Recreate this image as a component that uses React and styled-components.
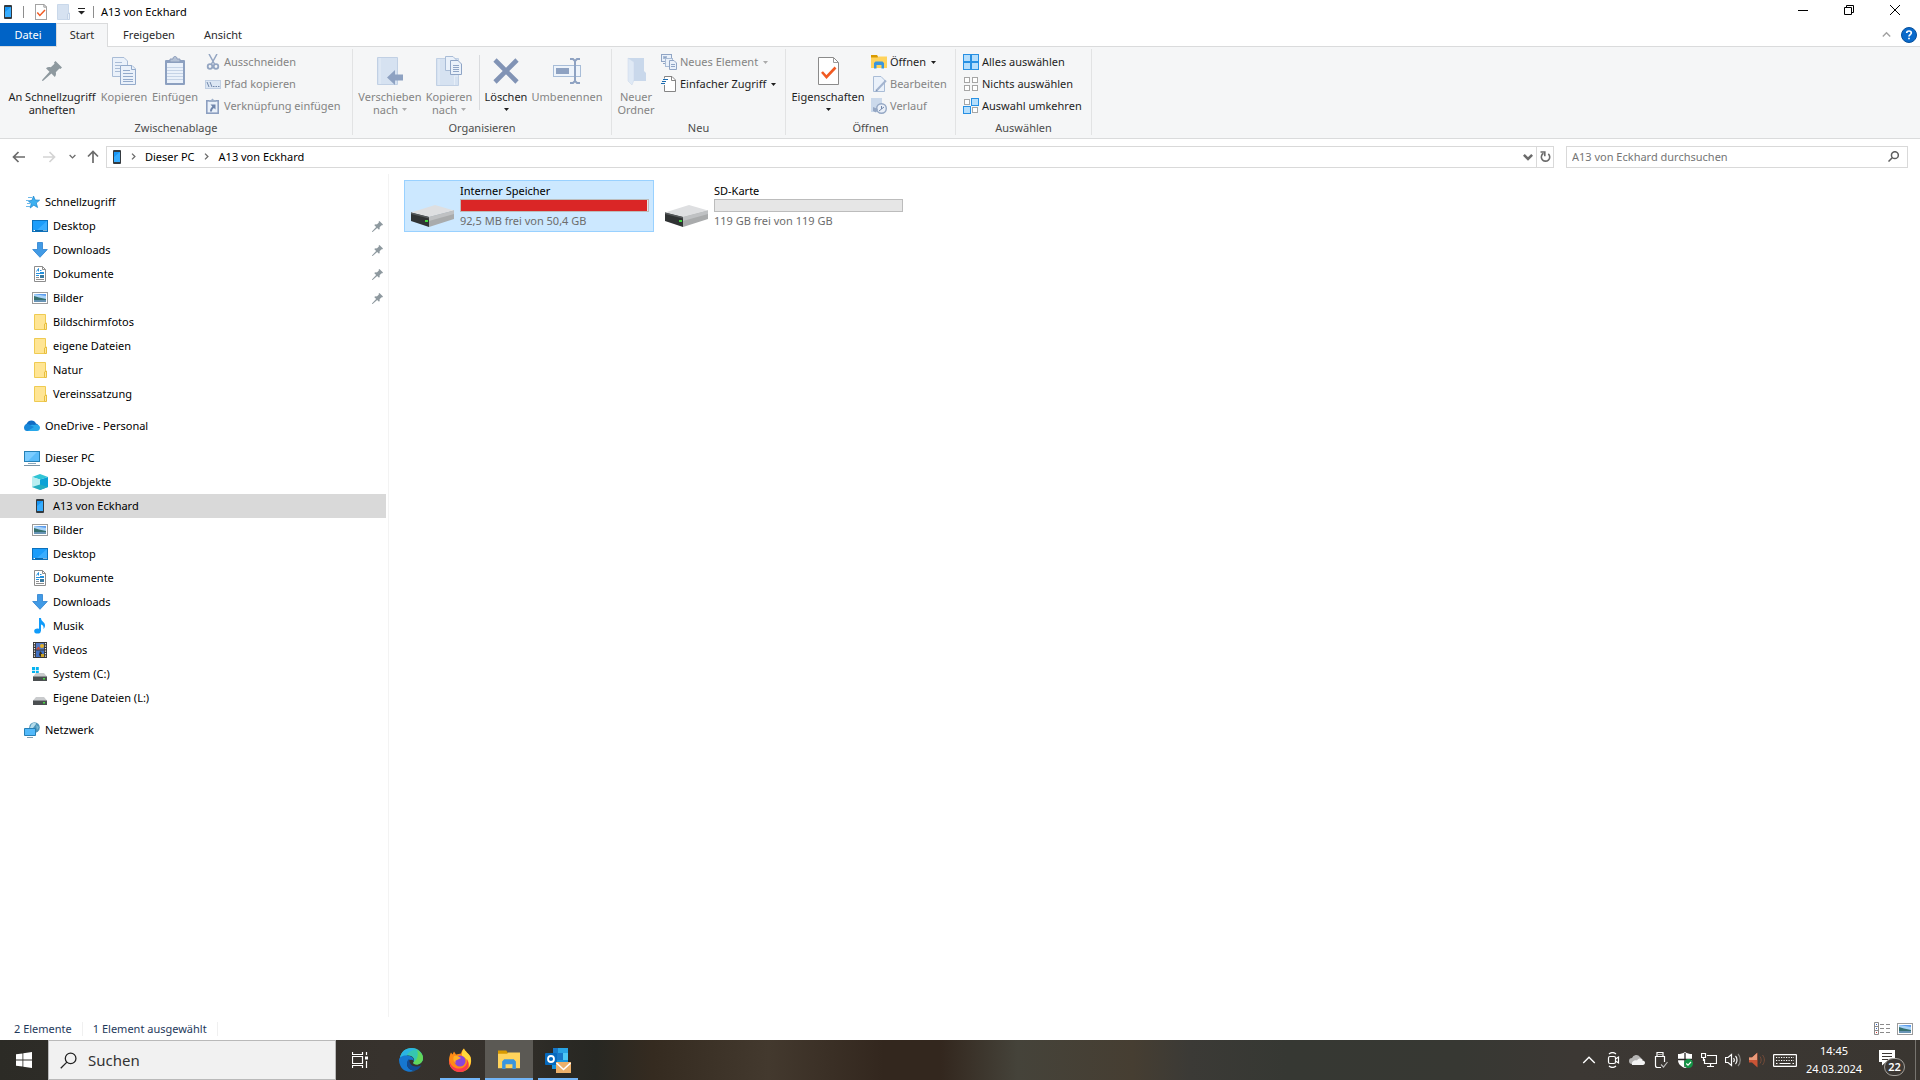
import React, {useState} from 'react';
import styled, {createGlobalStyle} from 'styled-components';

const GlobalStyle = createGlobalStyle`
  *{
    box-sizing: border-box;
  }
  body{
    margin: 0;
    background-color: #fff;
    color: #000;
    font-family: "Noto Sans", "Open Sans", sans-serif;
    font-size: 11px;
    line-height: 16px;
  }
  button, input{
    font: inherit;
    color: inherit;
    padding: 0;
    border: none;
    background: none;
  }
  svg{
    display: block;
    flex: none;
  }
`

const Window = styled.div`
  display: flex;
  flex-direction: column;
  min-height: 100vh;
`
const TitleBar = styled.header`
  display: flex;
  align-items: center;
  height: 23px;
  padding: 0 2px 0 4px;
  h1{
    flex: 1;
    margin: 0;
    font-size: 11px;
    font-weight: normal;
    line-height: 16px;
  }
`
const QuickBar = styled.div`
  display: flex;
  align-items: center;
  gap: ${props => props.$tight ? "7px" : "10px"};
  margin-right: ${props => props.$tight ? "6px" : "8px"};
`
const QuickButton = styled.button`
  display: flex;
`
const Line = styled.span`
  width: 1px;
  height: ${props => props.$tall ? "55px" : "12px"};
  margin: ${props => props.$tall ? "6px 4px 0" : "0 1px"};
  background-color: ${props => props.$tall ? "#d9dbde" : "#8d8d8d"};
`
const WindowButton = styled.button`
  display: flex;
  align-items: center;
  align-self: flex-start;
  justify-content: center;
  width: 46px;
  height: 20px;
  &:hover{
    background-color: #e5e5e5;
  }
`
const TabRow = styled.nav`
  display: flex;
  height: 24px;
  border-bottom: 1px solid #dadbdc;
`
const Tab = styled.button`
  min-width: ${props => props.$width}px;
  height: ${props => props.$active ? "24px" : "23px"};
  padding-bottom: ${props => props.$active ? "1px" : "0"};
  border: 1px solid ${props => props.$file ? "#0063c6" : props.$active ? "#dadbdc" : "#fff"};
  border-bottom: none;
  background-color: ${props => props.$file ? "#0063c6" : props.$active ? "#f5f6f7" : "#fff"};
  color: ${props => props.$file ? "#fff" : "#2b2b2b"};
`
const TabTools = styled.div`
  display: flex;
  align-items: center;
  gap: 10px;
  margin-left: auto;
  padding-right: 3px;
`
const Ribbon = styled.div`
  display: flex;
  height: 92px;
  padding: 2px 0 3px;
  border-bottom: 1px solid #dadbdc;
  background-color: #f5f6f7;
`
const Group = styled.section`
  display: flex;
  flex-direction: column;
  flex: none;
  min-width: ${props => props.$width}px;
  border-right: 1px solid #e2e3e4;
  h2{
    margin: auto 0 0;
    font-size: 11px;
    font-weight: normal;
    line-height: 14px;
    text-align: center;
    color: #4c4c4c;
  }
`
const GroupBody = styled.div`
  display: flex;
  padding-left: 4px;
`
const BigButton = styled.button`
  display: flex;
  flex-direction: column;
  align-items: center;
  width: ${props => props.$width}px;
  padding-top: 4px;
  line-height: 13px;
  white-space: nowrap;
  color: ${props => props.$off ? "#848484" : "#1e1e1e"};
`
const BigIcon = styled.span`
  display: flex;
  align-items: center;
  height: 35px;
  margin-bottom: 2px;
`
const LabelLine = styled.span`
  display: flex;
  align-items: center;
  justify-content: center;
  gap: 4px;
  min-height: 13px;
`
const SmallColumn = styled.div`
  display: flex;
  flex-direction: column;
  padding: 2px 0 0 ${props => props.$left || 0}px;
`
const SmallButton = styled.button`
  display: flex;
  align-items: center;
  gap: 3px;
  height: 22px;
  padding-left: 3px;
  white-space: nowrap;
  color: ${props => props.$off ? "#848484" : "#1e1e1e"};
  .caret{
    margin-left: 2px;
  }
`
const AddressRow = styled.div`
  display: flex;
  align-items: center;
  height: 35px;
  padding: 0 12px 0 4px;
`
const NavButton = styled.button`
  display: flex;
  align-items: center;
  justify-content: center;
  width: ${props => props.$width || 30}px;
  height: 22px;
`
const AddressBox = styled.div`
  display: flex;
  align-items: center;
  flex: 1;
  height: 22px;
  margin-right: 12px;
  padding-left: 6px;
  border: 1px solid #d9d9d9;
`
const Crumb = styled.button`
  line-height: 16px;
`
const CrumbGap = styled.span`
  display: flex;
  justify-content: center;
  width: 24px;
`
const AddressTools = styled.div`
  display: flex;
  align-self: stretch;
  margin-left: auto;
  button{
    display: flex;
    align-items: center;
    justify-content: center;
    width: 16px;
  }
  button + button{
    width: 17px;
    border-left: 1px solid #d9d9d9;
  }
`
const SearchBox = styled.label`
  display: flex;
  align-items: center;
  width: 342px;
  height: 22px;
  padding: 0 8px 0 5px;
  border: 1px solid #d9d9d9;
  input{
    flex: 1;
    outline: none;
  }
  input::placeholder{
    color: #757575;
    opacity: 1;
  }
`
const Body = styled.main`
  display: flex;
  flex: 1;
`
const NavPane = styled.aside`
  flex: none;
  width: 389px;
  padding: 16px 2px 0 0;
  border-right: 1px solid #f3f3f3;
`
const Tree = styled.ul`
  margin: 0 0 8px;
  padding: 0;
  list-style: none;
`
const TreeItem = styled.button`
  display: flex;
  align-items: center;
  gap: 5px;
  width: 100%;
  height: 24px;
  padding: 0 3px 0 ${props => props.$child ? "32px" : "24px"};
  text-align: left;
  background-color: ${props => props.$selected ? "#d9d9d9" : "transparent"};
  &:hover{
    background-color: ${props => props.$selected ? "#d9d9d9" : "#e5f3ff"};
  }
  .pin{
    margin-left: auto;
  }
`
const Files = styled.section`
  display: flex;
  flex-wrap: wrap;
  align-content: flex-start;
  flex: 1;
  gap: 4px;
  padding: 6px 15px;
`
const Drive = styled.button`
  display: flex;
  gap: 6px;
  width: 250px;
  height: 52px;
  padding: 2px 4px 0 6px;
  border: 1px solid ${props => props.$selected ? "#99d1ff" : "transparent"};
  background-color: ${props => props.$selected ? "#cce8ff" : "transparent"};
  text-align: left;
  > svg{
    margin-top: 22px;
  }
`
const DriveInfo = styled.span`
  display: flex;
  flex-direction: column;
  flex: 1;
  small{
    font-size: 11px;
    line-height: 18px;
    color: #6d6d6d;
  }
`
const Meter = styled.span`
  height: 13px;
  border: 1px solid #bcbcbc;
  background-color: #e6e6e6;
  span{
    display: block;
    height: 100%;
    background-color: #da2626;
  }
`
const StatusBar = styled.footer`
  display: flex;
  align-items: center;
  height: 23px;
  padding: 0 7px 0 4px;
  color: #1e395b;
  p{
    margin: 0;
    padding: 0 10px;
    line-height: 14px;
    border-right: 1px solid #f0f0f0;
  }
  div{
    display: flex;
    gap: 7px;
    margin-left: auto;
  }
  button{
    display: flex;
    align-items: center;
  }
`
const Taskbar = styled.div`
  display: flex;
  align-items: stretch;
  height: 40px;
  color: #fff;
  background: linear-gradient(90deg, #2c2b26 0%, #302e29 8%, #37322d 20%, #35312c 26%, #2b2a25 29%, #272722 31%,
    #352b20 34%, #43392e 40%, #33271e 46%, #33271e 49%, #45433a 53%, #463e32 59%, #3b3a36 62%, #363833 67%,
    #373833 76%, #3c3834 82%, #3a3631 100%);
`
const TaskButton = styled.button`
  display: flex;
  align-items: center;
  justify-content: center;
  width: 48px;
  margin-right: 1px;
  background-color: ${props => props.$active ? "#5b5954" : "transparent"};
  background-image: ${props => props.$open ? "linear-gradient(#72b5f7, #72b5f7)" : "none"};
  background-repeat: no-repeat;
  background-position: bottom center;
  background-size: ${props => props.$active ? "48px" : "40px"} 2px;
`
const StartButton = styled(TaskButton)`
  margin: 0;
`
const TaskViewButton = styled(TaskButton)`
  margin-right: 3px;
`
const TaskSearch = styled.label`
  display: flex;
  align-items: center;
  gap: 11px;
  width: 288px;
  padding-left: 11px;
  border: 1px solid #b9b9b9;
  background-color: #f1f1f1;
  color: #2b2b2b;
  font-size: 15px;
  input{
    width: 200px;
    outline: none;
  }
  input::placeholder{
    color: #333;
    opacity: 1;
  }
`
const Tray = styled.div`
  display: flex;
  margin-left: auto;
  padding-right: 4px;
`
const TrayButton = styled.button`
  display: flex;
  align-items: center;
  justify-content: center;
  width: ${props => props.$width || 24}px;
`
const Clock = styled.time`
  display: flex;
  flex-direction: column;
  justify-content: center;
  width: 66px;
  line-height: 18px;
  text-align: center;
`
const Notifications = styled.button`
  position: relative;
  width: 49px;
  border-right: 1px solid #77746f;
  svg{
    margin: 0 0 4px 12px;
  }
`
const Badge = styled.span`
  position: absolute;
  left: 17px;
  top: 18px;
  width: 21px;
  height: 18px;
  border: 1px solid #a5a29d;
  border-radius: 9px;
  background-color: #3c3834;
  font-weight: 600;
`

/* icons */
const Phone = ({box = 16}) => (
  <svg width={box} height="16" viewBox={box === 16 ? "0 0 16 16" : "4 0 8 16"}>
    <rect x="4" y="1" width="8" height="14" rx="1" fill="#343a3f" />
    <rect x="5" y="3" width="6" height="10" fill="#1896f5" />
    <path d="M5 13V8L11 3V13Z" fill="#37adff" />
  </svg>
)
const Caret = ({off}) => (
  <svg className="caret" width="5" height="3" viewBox="0 0 5 3"><path d="M0 0H5L2.500 3Z" fill={off ? "#ababab" : "#1e1e1e"} /></svg>
)
const CheckDoc = ({w = 12, h = 16}) => (
  <svg width={w} height={h} viewBox="0 0 21 28" preserveAspectRatio="none">
    <path d="M.5 .5H15.500L20.500 5.500V27.500H.5Z" fill="#fff" stroke="#8b8b8b" vectorEffect="non-scaling-stroke" />
    <path d="M15.500 .5V5.500H20.500" fill="none" stroke="#9a9a9a" vectorEffect="non-scaling-stroke" />
    <path d="M4 15L8.500 20L17.500 10.500" fill="none" stroke="#f15a22" strokeWidth="2.600" />
  </svg>
)
const Chevron = ({dir = 'down', size = 7, color = '#6b6b6b', weight = 1.5}) => {
  const turn = {down: 0, up: 180, right: -90}[dir];
  return (
    <svg width={size} height={size} viewBox="0 0 8 8" fill="none" stroke={color} strokeWidth={weight}>
      <path d="M.7 2.300L4 5.600L7.300 2.300" transform={`rotate(${turn} 4 4)`} />
    </svg>
  )
}
const Arrow = ({dir = 'left', color = '#6b6b6b'}) => (
  <svg width="14" height="14" viewBox="0 0 14 14" fill="none" stroke={color} strokeWidth="1.700">
    <path d="M13 7H1.700M6.500 2L1.500 7L6.500 12" transform={`rotate(${{left: 0, right: 180, up: 90}[dir]} 7 7)`} />
  </svg>
)
const Pin = ({size = 11}) => (
  <svg className="pin" width={size} height={size} viewBox="0 0 20 20" fill="#8e999f">
    <path d="M13.500 0L20 6.500L18.300 8L17.400 7.600L13.800 11.200C14.300 13 13.900 14.600 12.800 15.900L9.400 12.600L1.200 19.800L0 20L.3 18.800L7.500 10.700L4 7.200C5.400 6.100 7 5.800 8.800 6.300L12.500 2.700L12 1.500Z" />
  </svg>
)
const page = {fill: '#eaf1fa', stroke: '#a9bcd6'};
const CopyBig = () => (
  <svg width="24" height="28" viewBox="0 0 24 28" strokeWidth="1" {...page}>
    <path d="M.5 .5H12L15.500 4V19.500H.5Z" />
    <path d="M3 5.500H10M3 8.500H8M3 11.500H8M3 14.500H8" />
    <path d="M8.500 8.500H20L23.500 12V27.500H8.500Z" stroke="#93aacb" />
    <path d="M19.500 8.500V12.500H23.500M11 13.500H18M11 16.500H21M11 19.500H21M11 22.500H21M11 24.500H21" stroke="#93aacb" />
  </svg>
)
const PasteBig = () => (
  <svg width="20" height="29" viewBox="0 0 20 29">
    <rect x="0" y="4" width="20" height="25" rx="1" fill="#8ca0c0" />
    <rect x="2" y="7" width="16" height="20" fill="#eaf1fa" />
    <path d="M2 11.500H18M2 14.500H18M2 17.500H18M2 20.500H18M2 23.500H18" stroke="#c5d3e6" />
    <path d="M5 6V3H8C8 1 9 .5 10 .5S12 1 12 3H15V6Z" fill="#b4c1d5" stroke="#8c9dbb" />
  </svg>
)
const MoveTo = () => (
  <svg width="26" height="28" viewBox="0 0 26 28">
    <path d="M.5 .5H20.500V27.500H.5Z" fill="#d6e2f1" stroke="#c1d0e4" />
    <path d="M3 1V27" stroke="#e6eef8" />
    <path d="M10 20.500L18 13V17.500H26V23.500H18V28Z" fill="#8ea2c2" />
  </svg>
)
const CopyTo = () => (
  <svg width="26" height="30" viewBox="0 0 26 30">
    <path d="M.5 2.500H22.500V29.500H.5Z" fill="#d6e2f1" stroke="#c1d0e4" />
    <path d="M3 3V29M18.500 29V20H22" stroke="#e6eef8" fill="none" />
    <g {...page}>
      <path d="M9.500 .5H17L20.500 4V14.500H9.500Z" />
      <path d="M14.500 4.500H22L25.500 8V18.500H14.500Z" stroke="#8fa5c6" />
      <path d="M17 9.500H23M17 11.500H23M17 13.500H23M17 15.500H23" stroke="#8fa5c6" />
    </g>
  </svg>
)
const Delete = () => (
  <svg width="26" height="26" viewBox="0 0 26 26"><path d="M2 2L24 24M24 2L2 24" stroke="#8193b5" strokeWidth="4.600" /></svg>
)
const Rename = () => (
  <svg width="28" height="26" viewBox="0 0 28 26">
    <rect x=".5" y="7.500" width="27" height="11" fill="#eef4fb" stroke="#a8bdd8" />
    <rect x="3" y="10" width="13" height="6" fill="#8ea2c2" />
    <path d="M17 1H20L22 3L24 1H27M22 2V24M17 25H20L22 23L24 25H27" fill="none" stroke="#8ea2c2" strokeWidth="2" />
  </svg>
)
const NewFolder = () => (
  <svg width="19" height="28" viewBox="0 0 19 28">
    <path d="M1 1H17V14L19 16V24H1Z" fill="#c9d8eb" />
    <path d="M1 1L7 5V23L5 28L1 24Z" fill="#dfe9f5" stroke="#c9d6e8" strokeWidth=".5" />
  </svg>
)
const Cut = () => (
  <svg width="16" height="16" viewBox="0 0 16 16" fill="none" stroke="#93a5c2">
    <path d="M4 0L9.500 10M12 0L6.500 10" strokeWidth="1.500" />
    <circle cx="5" cy="12.500" r="2.300" strokeWidth="1.800" /><circle cx="11" cy="12.500" r="2.300" strokeWidth="1.800" />
  </svg>
)
const PathIcon = () => (
  <svg width="16" height="16" viewBox="0 0 16 16">
    <rect x=".5" y="4.500" width="15" height="8" fill="#dbe6f3" stroke="#c0cfe3" />
    <path d="M2 6L4 11M5 6L7 11M8 10.500H9.500M10.500 10.500H12M13 10.500H14.500" stroke="#7288ab" fill="none" />
  </svg>
)
const PasteLink = () => (
  <svg width="16" height="16" viewBox="0 0 16 16">
    <rect x="1.800" y="2.800" width="11.400" height="12.400" fill="#eaf1fa" stroke="#8c9fc0" strokeWidth="1.600" />
    <path d="M4 4V2H6L7.500 .5L9 2H11V4Z" fill="#9fb0ca" />
    <path d="M5.500 6.500H10.500V11.500L8.900 10C7.500 11 7 12 7 13.500H5C5 11.500 5.700 10 7.300 8.500Z" fill="#7086ac" />
  </svg>
)
const NewItem = () => (
  <svg width="16" height="16" viewBox="0 0 16 16" {...page}>
    <rect x=".5" y=".5" width="10" height="7" stroke="#90a5c5" /><rect x="2.500" y="2.500" width="3" height="2" fill="#90a5c5" />
    <rect x="4.500" y="4.500" width="7" height="8" /><path d="M8.500 6.500H13L15.500 9V15.500H8.500Z" stroke="#90a5c5" />
    <path d="M10 10.500H14M10 12.500H14M2 9.500H4" stroke="#90a5c5" />
  </svg>
)
const EasyAccess = () => (
  <svg width="16" height="16" viewBox="0 0 16 16" fill="none">
    <path d="M3.500 2.500V.5H11L14.500 4V15.500H3.500V9" fill="#fff" stroke="#858585" /><path d="M10.500 .5V4.500H14.500" stroke="#858585" />
    <path d="M2 3.500H7M1 5.500H5M0 7.500H4" stroke="#1b6bb0" />
  </svg>
)
const Folder = ({size = 16}) => (
  <svg width={size} height={size} viewBox="0 0 16 16">
    <path d="M0 1H6L7 2.500V5H0Z" fill="#d99a00" />
    <path d="M0 3.500H6.500L7.500 2.500H16V14H0Z" fill="#ffd35c" />
    <path d="M3 14.500V9L4.500 7.500H11.500L13 9V14.500H10.500V11H5.500V14.500Z" fill="#3a95dd" />
  </svg>
)
const EditDoc = () => (
  <svg width="16" height="16" viewBox="0 0 16 16">
    <path d="M2.500 .5H10L13.500 4V15.500H2.500Z" {...page} />
    <path d="M15 4.500L6 14" stroke="#a3b4cf" strokeWidth="2" /><path d="M5 13L4.500 15.500L7 15Z" fill="#8195b7" />
  </svg>
)
const HistoryIcon = () => (
  <svg width="16" height="16" viewBox="0 0 16 16">
    <rect x="0" y="0" width="11" height="14" fill="#cbd9eb" />
    <circle cx="10.500" cy="10.500" r="4.800" fill="#e9eff8" stroke="#94a7c4" strokeWidth="1.400" />
    <path d="M10.500 8V11L13 9M8 13L10.500 11" fill="none" stroke="#7488aa" /><path d="M2 9L7 11L5 14.500L2 13Z" fill="#94a7c4" />
  </svg>
)
const SelectIcon = ({on}) => (
  <svg width="16" height="16" viewBox="0 0 16 16" shapeRendering="crispEdges">
    {[[0, 0], [8, 0], [0, 8], [8, 8]].map(([x, y], i) => (
      on[i]
        ? <rect key={i} x={x + .5} y={y + .5} width="7" height="7" fill="#b5defc" stroke="#2790e3" />
        : <rect key={i} x={x + 1.5} y={y + 1.5} width="5" height="5" fill="#fff" stroke="#a6a6a6" />
    ))}
  </svg>
)
const YellowFolder = ({pale}) => (
  <svg width={pale ? 13 : 16} height="16" viewBox={pale ? "2 0 13 16" : "0 0 16 16"}>
    <path d="M2.500 .5H13.500V15.500H2.500Z" fill={pale ? "#d6e2f1" : "#ffe594"} stroke={pale ? "#c9d8ea" : "#efcb52"} />
    <path d="M12.500 15.500V10L14.500 9V15.500Z" fill={pale ? "#e8f0f8" : "#ffe89b"} stroke={pale ? "#c3d2e6" : "#e8be3f"} />
  </svg>
)
const Star = () => (
  <svg width="16" height="16" viewBox="0 0 16 16">
    <path d="M9.500 2L11.200 6L15.600 6.200L12.300 9L13.600 13.500L9.800 11.200L6.200 14L7.200 9.600L4.300 7L8 6.300Z" fill="#3db0f0" stroke="#1582cd" strokeWidth=".7" />
    <path d="M4 3.500H8M2 6.500H5M3 9.500H6M2 12.500H6" stroke="#6db9ea" />
  </svg>
)
const Desktop = () => (
  <svg width="16" height="16" viewBox="0 0 16 16">
    <rect x=".5" y="2.500" width="15" height="11" fill="#1b9dfb" stroke="#0b70bb" /><path d="M15 3V12H5Z" fill="#39adff" />
    <path d="M1 12.500H15" stroke="#0b68ac" /><path d="M1.500 12.500H3M11.500 12.500H12.500M13.500 12.500H14.500" stroke="#fff" />
  </svg>
)
const Download = () => (
  <svg width="16" height="16" viewBox="0 0 16 16"><path d="M5.500 .5H10.500V7.500H15.300L8 15.300L.7 7.500H5.500Z" fill="#419ae5" stroke="#2b80cf" strokeWidth=".8" /></svg>
)
const DocIcon = () => (
  <svg width="16" height="16" viewBox="0 0 16 16" fill="none">
    <path d="M2.500 .5H10.500L13.500 3.500V15.500H2.500Z" fill="#fff" stroke="#8d8d8d" />
    <path d="M10.500 .5V3.500H13.500" stroke="#8d8d8d" />
    <path d="M4.500 5.500L6.500 2.500V5.500M8 4.500H9.500M8 6.500H12M4 7.500H12M4 9.500H7" stroke="#2590dc" />
    <path d="M4 11.500H7M4 13.500H12" stroke="#8f8f8f" /><rect x="8" y="9" width="4" height="3" fill="#3a7a9f" />
  </svg>
)
const Picture = () => (
  <svg width="16" height="16" viewBox="0 0 16 16">
    <rect x=".5" y="2.500" width="15" height="11" fill="#fff" stroke="#9b9b9b" />
    <rect x="2" y="4" width="12" height="8" fill="#a9d3f8" /><path d="M2 4H14V6L8 5Z" fill="#5d9dee" />
    <path d="M2 6L7 7.500L14 9V10H2Z" fill="#36706f" /><path d="M2 10H14V12H2Z" fill="#6894b5" />
  </svg>
)
const Cloud = () => (
  <svg width="16" height="16" viewBox="0 0 16 16">
    <path d="M3.500 12A3.500 3.500 0 0 1 2.800 5.500A5 5 0 0 1 12 5.500A3.500 3.500 0 0 1 13 12Z" fill="#0f6cc4" />
    <path d="M2 12C3 8 7 6 10 7C12 5.500 16 7 16 9.500C16 12 14.500 13 13 13H4C3 13 2 12.500 2 12Z" fill="#28a8ea" />
    <path d="M0 9.500A3.500 3.500 0 0 1 6 7L10 9L3.500 13A3.500 3.500 0 0 1 0 9.500Z" fill="#1787d9" />
  </svg>
)
const Computer = () => (
  <svg width="16" height="16" viewBox="0 0 16 16">
    <rect x=".5" y="1.500" width="15" height="10" fill="#5bbcf9" stroke="#2580b5" /><path d="M1 2H13L4 11H1Z" fill="#7bccff" />
    <path d="M4 13.500H12" stroke="#8ba8bb" /><path d="M0 15.500H16" stroke="#7b93a5" />
  </svg>
)
const Cube = () => (
  <svg width="16" height="16" viewBox="0 0 16 16">
    <path d="M8 0L16 3L8 5.500L0 3Z" fill="#31c5d5" /><path d="M0 3L8 5.500V16L0 13Z" fill="#b8eef1" />
    <path d="M16 3L8 5.500V16L16 13Z" fill="#0aa2d6" /><path d="M0 13L8 10.500L16 13L8 16Z" fill="#23adc0" />
  </svg>
)
const Music = () => (
  <svg width="16" height="16" viewBox="0 0 16 16">
    <ellipse cx="5.500" cy="13" rx="3.300" ry="2.600" fill="#109bfa" /><path d="M7 0H9C9 3.500 13 4 13 7.500C13 9.500 12 10.500 11.500 11C12 8.500 11 7 9 6.500V13H7Z" fill="#109bfa" />
  </svg>
)
const Video = () => (
  <svg width="16" height="16" viewBox="0 0 16 16">
    <rect x="1" y="0" width="14" height="16" fill="#363636" /><rect x="4" y="1" width="8" height="6.500" fill="#5279c4" /><rect x="4" y="8.500" width="8" height="6.500" fill="#4170c2" />
    <path d="M2.500 1V16M13.500 1V16" stroke="#f3f3f3" strokeWidth="1.200" strokeDasharray="1.300 1.200" />
    <path d="M5 6L7 4.500L8 7.500H4Z" fill="#c84b36" /><circle cx="10" cy="4" r="2" fill="#e5b227" /><path d="M8 9L10 11L9 15L7 13Z" fill="#342b1d" /><path d="M9 12H12V15H9Z" fill="#caa326" />
  </svg>
)
const Disk = ({system}) => (
  <svg width="16" height="16" viewBox="0 0 16 16">
    <path d="M4 7H12L15 10.500H1Z" fill="#c9cbcd" /><path d="M1 10H15V15H1Z" fill="#4b4f51" />
    <path d="M1 10.500H15" stroke="#8d9194" /><rect x="11" y="12" width="2" height="1.500" fill="#49dc45" />
    {system && <path d="M0 1H3V4H0ZM3.800 1H6.800V4H3.800ZM0 4.800H3V7H0ZM3.800 4.800H6.800V7H3.800Z" fill="#05b3f1" />}
  </svg>
)
const Network = () => (
  <svg width="16" height="16" viewBox="0 0 16 16">
    <circle cx="10.500" cy="5.500" r="5.300" fill="#4d94b8" /><path d="M7 3C9 0 12 .5 12 2L9 6H6Z" fill="#b5dceb" /><path d="M12 3L15 5L13 8Z" fill="#74b7d3" />
    <path d="M.5 6.500H11.500V13.500H.5Z" fill="#52b9fa" stroke="#267fb5" /><path d="M3 15.500H9" stroke="#829eaf" />
  </svg>
)
const DriveIcon = () => (
  <svg width="43" height="22" viewBox="0 0 43 22">
    <path d="M0 7.500L24 0L43 5.500L18 12Z" fill="#dedfe1" />
    <path d="M18 12L43 5.500V14L18 22Z" fill="#a9abac" />
    <path d="M18 12L43 5.500V9L18 16Z" fill="#bfc1c3" />
    <path d="M0 7.500L18 12V22L0 16Z" fill="#303334" />
    <path d="M0 7.500L18 12V13.500L0 9Z" fill="#55595b" />
    <rect x="14" y="15" width="3" height="2" fill="#40d83c" />
  </svg>
)
const Magnifier = ({size, color, weight = 1.3}) => (
  <svg width={size} height={size} viewBox="0 0 16 16" fill="none" stroke={color} strokeWidth={weight}>
    <circle cx="10" cy="6" r="5" /><path d="M6.500 9.500L.7 15.300" />
  </svg>
)
const Refresh = () => (
  <svg width="11" height="12" viewBox="0 0 11 12" fill="none" stroke="#6b6b6b" strokeWidth="1.600">
    <path d="M3.500 2.300A4.200 4.200 0 1 0 8.300 2.800" /><path d="M.5 1H4.800V5.300" />
  </svg>
)
const Edge = () => (
  <svg width="24" height="24" viewBox="0 0 24 24">
    <path d="M1 10C2 3.500 7 0 12.500 0C19.500 0 24 5 24 10C24 14 21 16.500 17.500 16.500C15 16.500 13.800 15.500 14.500 14.300C16.500 11 13.500 7.500 9 7.500C5 7.500 2 9 1 12Z" fill="#36c7b0" />
    <path d="M1 10C2 3.500 7 0 12.500 0C15 0 17 .8 19 2C14 1 9 4 7.500 8C4.500 7.500 2 9 1 12Z" fill="#2bb5e2" />
    <path d="M18 2C22 4 24 7 24 10C24 14 21 16.500 17.500 16.500C15 16.500 13.800 15.500 14.500 14.300C18 12 20 7 18 2Z" fill="#62d75a" />
    <path d="M0 12C0 8.500 4.500 7 8.500 7.500C13 8 15 10.500 14.800 13C13 10.500 8 11.500 8 16C8 20 12 23 16.500 22.500C14.500 24 5 25.500 1.500 18C.5 16 0 14 0 12Z" fill="#1677cf" />
    <path d="M8 16C8 13 9 11.500 10.500 11C9.500 15 13 19 18 18.500C20 18.500 21.500 17.500 22.500 17C21 20 18.500 22 16 22.600C12 23 8 20 8 16Z" fill="#114a92" />
  </svg>
)
const Firefox = () => (
  <svg width="24" height="24" viewBox="0 0 24 24">
    <path d="M3 4.500L4.500 6.500L6 3.500L8 6.500L13 5.500C13.500 3.500 14.500 1.500 16 .5C16.500 3 21 5.500 22.500 9C25 17 20 24 12.500 24C5 24 .5 18.500 1 12C1.200 9 2 6.500 3 4.500Z" fill="#ff8a16" />
    <path d="M16 .5C16.500 3 21 5.500 22.500 9C23.500 12 23 16 21 19C21.500 12 17 10 14 7.500C13.500 4.500 14.500 2 16 .5Z" fill="#ffd83b" />
    <path d="M1.200 11C2 18 7 21 12 20.500C17 20 20 16 19 11C23 18 18.500 24 12 24C5 24 .5 18 1.200 11Z" fill="#fb3b4e" />
    <circle cx="12" cy="13" r="5.500" fill="#8a46d8" /><path d="M6 8C9 7 11 8.500 13 10L9 12C7 12.500 7 14 8.500 15.500C5.500 14 4.500 11 6 8Z" fill="#ffae26" />
  </svg>
)
const Outlook = () => (
  <svg width="26" height="26" viewBox="0 0 26 26">
    <rect x="8" y="1" width="15" height="13" fill="#1877c7" /><rect x="13" y="1" width="10" height="5" fill="#28a4e5" /><rect x="18" y="6" width="5" height="7" fill="#4cc8f5" />
    <path d="M7 13H23V22H7Z" fill="#1594df" /><rect x="0" y="6" width="12" height="12" rx="1" fill="#0569bd" />
    <circle cx="6" cy="12" r="3" fill="none" stroke="#fff" strokeWidth="1.800" />
    <rect x="11" y="15" width="15" height="11" fill="#ecb06a" /><path d="M11.500 16L18.500 22.500L25.500 16" fill="none" stroke="#fff" strokeWidth="1.600" />
  </svg>
)

const quickAccess = [
  {name: 'Desktop', icon: <Desktop />, pinned: true},
  {name: 'Downloads', icon: <Download />, pinned: true},
  {name: 'Dokumente', icon: <DocIcon />, pinned: true},
  {name: 'Bilder', icon: <Picture />, pinned: true},
  {name: 'Bildschirmfotos', icon: <YellowFolder />},
  {name: 'eigene Dateien', icon: <YellowFolder />},
  {name: 'Natur', icon: <YellowFolder />},
  {name: 'Vereinssatzung', icon: <YellowFolder />},
]
const thisPc = [
  {name: '3D-Objekte', icon: <Cube />},
  {name: 'A13 von Eckhard', icon: <Phone />},
  {name: 'Bilder', icon: <Picture />},
  {name: 'Desktop', icon: <Desktop />},
  {name: 'Dokumente', icon: <DocIcon />},
  {name: 'Downloads', icon: <Download />},
  {name: 'Musik', icon: <Music />},
  {name: 'Videos', icon: <Video />},
  {name: 'System (C:)', icon: <Disk system />},
  {name: 'Eigene Dateien (L:)', icon: <Disk />},
]
const tree = [
  {name: 'Schnellzugriff', icon: <Star />, items: quickAccess},
  {name: 'OneDrive - Personal', icon: <Cloud />, items: []},
  {name: 'Dieser PC', icon: <Computer />, items: thisPc},
  {name: 'Netzwerk', icon: <Network />, items: []},
]
const drives = [
  {name: 'Interner Speicher', free: '92,5 MB frei von 50,4 GB', used: 99.2},
  {name: 'SD-Karte', free: '119 GB frei von 119 GB', used: 0},
]

function Big({icon, lines, width, off, caret}){
  return (
    <BigButton $width={width} $off={off}>
      <BigIcon>{icon}</BigIcon>
      {lines.map((line, i) => (
        <LabelLine key={i}>{line}{caret && i === lines.length - 1 && <Caret off={off} />}</LabelLine>
      ))}
    </BigButton>
  )
}
function Small({icon, label, off, caret}){
  return <SmallButton $off={off}>{icon}{label}{caret && <Caret off={off} />}</SmallButton>
}

function RibbonBar(){
  return (
    <Ribbon>
      <Group $width={353}>
        <GroupBody>
          <Big width={96} icon={<Pin size={20} />} lines={['An Schnellzugriff', 'anheften']} />
          <Big width={48} off icon={<CopyBig />} lines={['Kopieren']} />
          <Big width={54} off icon={<PasteBig />} lines={['Einfügen']} />
          <SmallColumn>
            <Small off icon={<Cut />} label="Ausschneiden" />
            <Small off icon={<PathIcon />} label="Pfad kopieren" />
            <Small off icon={<PasteLink />} label="Verknüpfung einfügen" />
          </SmallColumn>
        </GroupBody>
        <h2>Zwischenablage</h2>
      </Group>
      <Group $width={259}>
        <GroupBody>
          <Big width={66} off caret icon={<MoveTo />} lines={['Verschieben', 'nach']} />
          <Big width={52} off caret icon={<CopyTo />} lines={['Kopieren', 'nach']} />
          <Line $tall />
          <Big width={44} caret icon={<Delete />} lines={['Löschen', '']} />
          <Big width={78} off icon={<Rename />} lines={['Umbenennen']} />
        </GroupBody>
        <h2>Organisieren</h2>
      </Group>
      <Group $width={174}>
        <GroupBody>
          <Big width={40} off icon={<NewFolder />} lines={['Neuer', 'Ordner']} />
          <SmallColumn $left={2}>
            <Small off caret icon={<NewItem />} label="Neues Element" />
            <Small caret icon={<EasyAccess />} label="Einfacher Zugriff" />
          </SmallColumn>
        </GroupBody>
        <h2>Neu</h2>
      </Group>
      <Group $width={170}>
        <GroupBody>
          <Big width={76} caret icon={<CheckDoc w={21} h={28} />} lines={['Eigenschaften', '']} />
          <SmallColumn $left={2}>
            <Small caret icon={<Folder />} label="Öffnen" />
            <Small off icon={<EditDoc />} label="Bearbeiten" />
            <Small off icon={<HistoryIcon />} label="Verlauf" />
          </SmallColumn>
        </GroupBody>
        <h2>Öffnen</h2>
      </Group>
      <Group $width={136}>
        <GroupBody>
          <SmallColumn>
            <Small icon={<SelectIcon on={[1, 1, 1, 1]} />} label="Alles auswählen" />
            <Small icon={<SelectIcon on={[0, 0, 0, 0]} />} label="Nichts auswählen" />
            <Small icon={<SelectIcon on={[0, 1, 1, 0]} />} label="Auswahl umkehren" />
          </SmallColumn>
        </GroupBody>
        <h2>Auswählen</h2>
      </Group>
    </Ribbon>
  )
}

function TrayIcons(){
  const line = {fill: 'none', stroke: '#fff', strokeWidth: 1.2};
  return (
    <>
      <TrayButton aria-label="Ausgeblendete Symbole"><Chevron dir="up" size={14} color="#fff" weight={0.8} /></TrayButton>
      <TrayButton aria-label="Kamera">
        <svg width="16" height="16" viewBox="0 0 16 16" {...line}>
          <rect x="3.500" y="4.500" width="7" height="7" rx="1.500" /><path d="M10.500 7L13.500 5V11L10.500 9M4 2C6 .3 9 .3 11 2M4 14C6 15.700 9 15.700 11 14" />
        </svg>
      </TrayButton>
      <TrayButton aria-label="OneDrive">
        <svg width="16" height="16" viewBox="0 0 16 16">
          <path d="M3 12A3 3 0 0 1 3 6A4.500 4.500 0 0 1 11 5L14 8Z" fill="#b5b4b3" />
          <path d="M3 13C2 9 6 7.500 8 8.500C10 5.500 13 6.500 13.500 8.500C17 8.500 16.500 13 14 13Z" fill="#f3f3f3" />
        </svg>
      </TrayButton>
      <TrayButton aria-label="USB">
        <svg width="16" height="16" viewBox="0 0 16 16" {...line}>
          <path d="M4 4.500V.5H10V4.500M8 15.500H4.500C3 15.500 2.500 15 2.500 13.500V4.500H11.500V10M6 2V3M8 2V3" /><path d="M8 12.500L10.500 15L14.500 10" stroke="#bbb" />
        </svg>
      </TrayButton>
      <TrayButton aria-label="Sicherheit">
        <svg width="16" height="16" viewBox="0 0 16 16">
          <path d="M8 0C10 1.500 12.500 2 15 2V8C15 12 12 14.500 8 16C4 14.500 1 12 1 8V2C3.500 2 6 1.500 8 0Z" fill="#fff" />
          <path d="M8 1V15M1 7.500H15" stroke="#282725" strokeWidth="1.300" />
          <circle cx="11.500" cy="11.500" r="4.500" fill="#159447" /><path d="M9.300 11.500L11 13.200L14 10" {...line} />
        </svg>
      </TrayButton>
      <TrayButton aria-label="Netzwerk">
        <svg width="16" height="16" viewBox="0 0 16 16" {...line}>
          <path d="M6 3.500H15.500V11.500H3.500V7M9.500 11.500V14M6 14.500H13" /><path d="M.5 1.500H4.500V5.500H.5ZM2.500 5.500V9" />
        </svg>
      </TrayButton>
      <TrayButton aria-label="Lautsprecher">
        <svg width="16" height="16" viewBox="0 0 16 16" {...line}>
          <path d="M.5 5.500H3L6.500 2.500V13.500L3 10.500H.5ZM8.500 6C9.300 7 9.300 9 8.500 10M10.500 4C12.500 6 12.500 10 10.500 12" /><path d="M13 2C16 5 16 11 13 14" stroke="#8b8985" />
        </svg>
      </TrayButton>
      <TrayButton aria-label="Ton">
        <svg width="16" height="16" viewBox="0 0 16 16" fill="none">
          <path d="M0 5.500H3L8.500 .5V15.500L3 10.500H0Z" fill="#c95435" /><path d="M3 5.500L8 1V8H0V5.500Z" fill="#e89a7b" />
          <path d="M11 4.500C12.500 6.500 12.500 9.500 11 11.500M13.500 3C16 6 16 10 13.500 13" stroke="#764b38" />
        </svg>
      </TrayButton>
      <TrayButton $width={32} aria-label="Bildschirmtastatur">
        <svg width="24" height="13" viewBox="0 0 24 13" {...line}>
          <rect x=".6" y=".6" width="22.800" height="11.800" rx=".5" /><path d="M3 3.500H21M3 6.500H21" strokeDasharray="1.200 1.300" /><path d="M3 9.500H4.500M6.500 9.500H17.500M19.500 9.500H21" />
        </svg>
      </TrayButton>
    </>
  )
}

export default function App(){
  const [place, setPlace] = useState('A13 von Eckhard');
  const [drive, setDrive] = useState(0);

  return (
    <Window>
      <GlobalStyle />
      <TitleBar>
        <QuickBar>
          <Phone box={8} />
          <Line />
          <QuickButton aria-label="Eigenschaften"><CheckDoc /></QuickButton>
          <QuickButton aria-label="Neuer Ordner"><YellowFolder pale /></QuickButton>
        </QuickBar>
        <QuickBar $tight>
          <QuickButton aria-label="Symbolleiste anpassen">
            <svg width="7" height="7" viewBox="0 0 7 7"><path d="M0 .5H7" stroke="#222" /><path d="M0 3H7L3.500 6.500Z" fill="#222" /></svg>
          </QuickButton>
          <Line />
        </QuickBar>
        <h1>A13 von Eckhard</h1>
        <WindowButton aria-label="Minimieren"><svg width="10" height="10" viewBox="0 0 10 10"><path d="M0 5.500H10" stroke="#000" /></svg></WindowButton>
        <WindowButton aria-label="Verkleinern">
          <svg width="10" height="10" viewBox="0 0 10 10" fill="none" stroke="#000"><path d="M.5 2.500H7.500V9.500H.5ZM2.500 2V.5H9.500V7.500H8" /></svg>
        </WindowButton>
        <WindowButton aria-label="Schließen"><svg width="10" height="10" viewBox="0 0 10 10"><path d="M0 0L10 10M10 0L0 10" stroke="#000" /></svg></WindowButton>
      </TitleBar>
      <TabRow>
        <Tab $width={56} $file>Datei</Tab>
        <Tab $width={52} $active>Start</Tab>
        <Tab $width={82}>Freigeben</Tab>
        <Tab $width={66}>Ansicht</Tab>
        <TabTools>
          <QuickButton aria-label="Menüband minimieren"><Chevron dir="up" size={9} color="#a0a0a0" weight={1.2} /></QuickButton>
          <QuickButton aria-label="Hilfe">
            <svg width="16" height="16" viewBox="0 0 16 16" fill="none">
              <circle cx="8" cy="8" r="7.500" fill="#0a6acb" stroke="#07509c" />
              <path d="M5.700 6C5.700 3.300 10.300 3.300 10.300 6C10.300 7.500 8 7.700 8 9.500M8 10.700V12.300" stroke="#fff" strokeWidth="1.700" />
            </svg>
          </QuickButton>
        </TabTools>
      </TabRow>
      <RibbonBar />
      <AddressRow>
        <NavButton aria-label="Zurück"><Arrow /></NavButton>
        <NavButton aria-label="Vorwärts"><Arrow dir="right" color="#d4d4d4" /></NavButton>
        <NavButton $width={16} aria-label="Zuletzt besucht"><Chevron size={7} /></NavButton>
        <NavButton $width={26} aria-label="Nach oben"><Arrow dir="up" /></NavButton>
        <AddressBox>
          <Phone box={8} />
          <CrumbGap><Chevron dir="right" /></CrumbGap>
          <Crumb>Dieser PC</Crumb>
          <CrumbGap><Chevron dir="right" /></CrumbGap>
          <Crumb>A13 von Eckhard</Crumb>
          <AddressTools>
            <button aria-label="Vorherige Orte"><Chevron size={10} weight={2} /></button>
            <button aria-label="Aktualisieren"><Refresh /></button>
          </AddressTools>
        </AddressBox>
        <SearchBox>
          <input type="text" placeholder="A13 von Eckhard durchsuchen" aria-label="A13 von Eckhard durchsuchen" />
          <Magnifier size={11} color="#5f5f5f" weight={2.2} />
        </SearchBox>
      </AddressRow>
      <Body>
        <NavPane>
          {tree.map(root => (
            <Tree key={root.name}>
              <li><TreeItem onClick={() => setPlace(root.name)}>{root.icon}{root.name}</TreeItem></li>
              {root.items.map(item => (
                <li key={item.name}>
                  <TreeItem $child $selected={place === item.name} onClick={() => setPlace(item.name)}>
                    {item.icon}{item.name}{item.pinned && <Pin />}
                  </TreeItem>
                </li>
              ))}
            </Tree>
          ))}
        </NavPane>
        <Files>
          {drives.map((d, i) => (
            <Drive key={d.name} $selected={drive === i} onClick={() => setDrive(i)}>
              <DriveIcon />
              <DriveInfo>
                {d.name}
                <Meter><span style={{width: `${d.used}%`}} /></Meter>
                <small>{d.free}</small>
              </DriveInfo>
            </Drive>
          ))}
        </Files>
      </Body>
      <StatusBar>
        <p>2 Elemente</p>
        <p>1 Element ausgewählt</p>
        <div>
          <button aria-label="Details">
            <svg width="16" height="13" viewBox="0 0 16 13" fill="none" stroke="#8a8a8a">
              <path d="M.5 .5H4.500V12.500H.5ZM.5 4.500H4.500M.5 8.500H4.500" /><path d="M6 2.500H10M12 2.500H16M6 6.500H10M12 6.500H16M6 10.500H10M12 10.500H16" /><path d="M2 10.500H3" stroke="#d33" /><path d="M2 2.500H3M2 6.500H3" stroke="#36c" />
            </svg>
          </button>
          <button aria-label="Große Symbole"><Picture /></button>
        </div>
      </StatusBar>
      <Taskbar>
        <StartButton aria-label="Start">
          <svg width="16" height="16" viewBox="0 0 16 16"><path d="M0 2.300L6.500 1.400V7.500H0ZM7.300 1.200L16 0V7.500H7.300ZM0 8.500H6.500V14.600L0 13.700ZM7.300 8.500H16V16L7.300 14.800Z" fill="#fff" /></svg>
        </StartButton>
        <TaskSearch>
          <Magnifier size={17} color="#222" weight={1.2} />
          <input type="text" placeholder="Suchen" aria-label="Suchen" />
        </TaskSearch>
        <TaskViewButton aria-label="Aktive Anwendungen">
          <svg width="17" height="16" viewBox="0 0 17 16" fill="none" stroke="#fff" strokeWidth="1.200">
            <path d="M.5 0V2.500H10.500V0M.5 4.500H10.500V11.500H.5ZM.5 16V13.500H10.500V16M14.500 0V3M14.500 9V16" /><path d="M13 6H16" strokeWidth="3" />
          </svg>
        </TaskViewButton>
        <TaskButton aria-label="Edge"><Edge /></TaskButton>
        <TaskButton $open aria-label="Firefox"><Firefox /></TaskButton>
        <TaskButton $open $active aria-label="Explorer"><Folder size={22} /></TaskButton>
        <TaskButton $open aria-label="Outlook"><Outlook /></TaskButton>
        <Tray>
          <TrayIcons />
          <Clock><span>14:45</span><span>24.03.2024</span></Clock>
          <Notifications aria-label="22 neue Benachrichtigungen">
            <svg width="16" height="16" viewBox="0 0 16 16"><path d="M0 0H16V12H7L3 15.500V12H0Z" fill="#fff" /><path d="M3 3.500H13M3 6.500H13M3 9.500H9" stroke="#3c3834" /></svg>
            <Badge>22</Badge>
          </Notifications>
        </Tray>
      </Taskbar>
    </Window>
  )
}
